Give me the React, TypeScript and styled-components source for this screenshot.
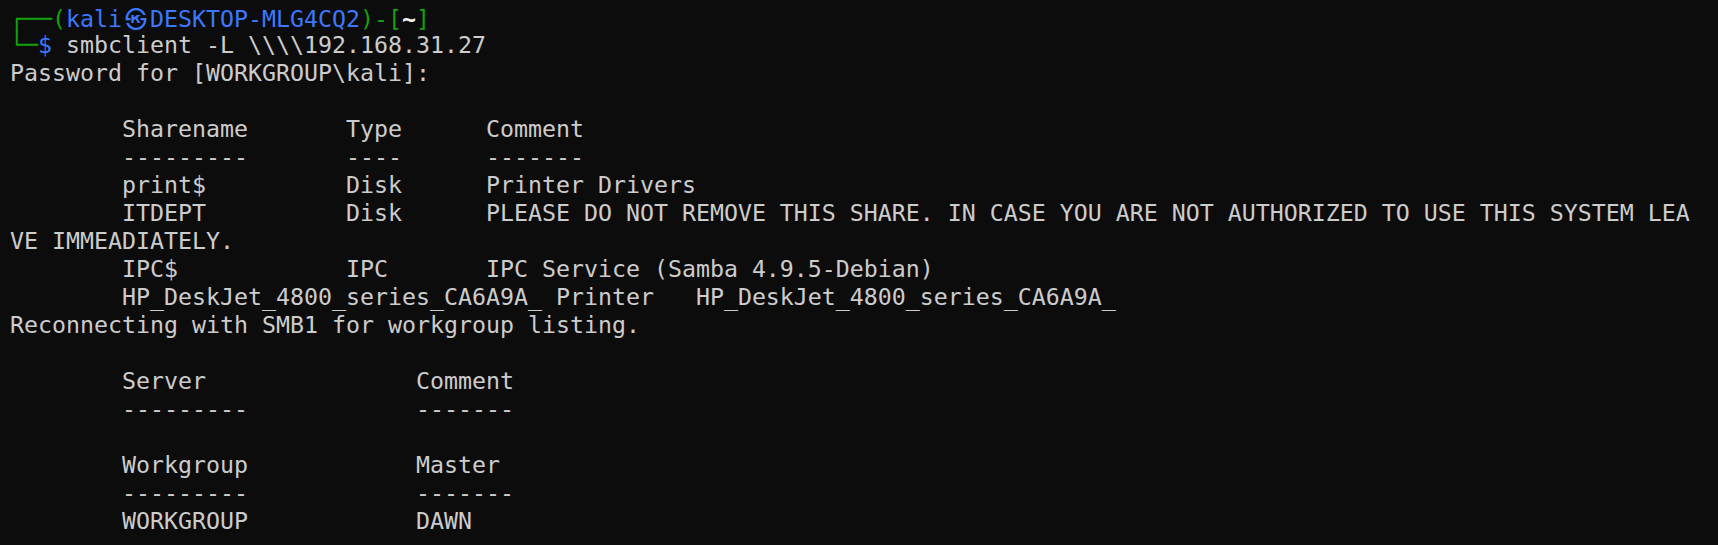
import React from "react";
import styled, { createGlobalStyle } from "styled-components";

const GlobalStyle = createGlobalStyle`
  html, body {
    margin: 0;
    padding: 0;
    background: #0c0c0c;
  }
`;

const Terminal = styled.div`
  box-sizing: border-box;
  width: 1718px;
  height: 545px;
  overflow: hidden;
  background: #0c0c0c;
  color: #cccccc;
  padding: 3px 0 0 10px;
  font-family: "DejaVu Sans Mono", "Liberation Mono", "Noto Sans CJK KR", monospace;
  font-size: 23.25px;
  line-height: 28px;
`;

const Line = styled.div`
  white-space: pre;
  height: 28px;
`;

const Frame = styled.span`
  color: #13a10e;
  display: inline-block;
  transform: scaleY(1.05);
`;

const Green = styled.span`
  color: #13a10e;
`;

const Accent = styled.span<{ $white?: boolean }>`
  color: ${(p) => (p.$white ? "#f2f2f2" : "#3b78ff")};
  font-weight: ${(p) => (p.$white ? "bold" : "normal")};
`;

const Mark = styled.span`
  display: inline-block;
  width: 28px;
  text-align: center;
  font-family: "Noto Sans CJK KR", sans-serif;
  font-weight: bold;
  font-size: 22px;
`;

const output: string[] = [
  "Password for [WORKGROUP\\kali]:",
  "",
  "        Sharename       Type      Comment",
  "        ---------       ----      -------",
  "        print$          Disk      Printer Drivers",
  "        ITDEPT          Disk      PLEASE DO NOT REMOVE THIS SHARE. IN CASE YOU ARE NOT AUTHORIZED TO USE THIS SYSTEM LEA",
  "VE IMMEADIATELY.",
  "        IPC$            IPC       IPC Service (Samba 4.9.5-Debian)",
  "        HP_DeskJet_4800_series_CA6A9A_ Printer   HP_DeskJet_4800_series_CA6A9A_",
  "Reconnecting with SMB1 for workgroup listing.",
  "",
  "        Server               Comment",
  "        ---------            -------",
  "",
  "        Workgroup            Master",
  "        ---------            -------",
  "        WORKGROUP            DAWN",
];

export default function App() {
  return (
    <>
      <GlobalStyle />
      <Terminal>
        <Line>
          <Frame>┌──</Frame>
          <Green>(</Green>
          <Accent>
            kali<Mark>㉿</Mark>DESKTOP-MLG4CQ2
          </Accent>
          <Green>)-[</Green>
          <Accent $white>~</Accent>
          <Green>]</Green>
        </Line>
        <Line>
          <Frame>└─</Frame>
          <Accent>$</Accent>
          {" smbclient -L \\\\\\\\192.168.31.27"}
        </Line>
        {output.map((text, i) => (
          <Line key={i}>{text}</Line>
        ))}
      </Terminal>
    </>
  );
}
